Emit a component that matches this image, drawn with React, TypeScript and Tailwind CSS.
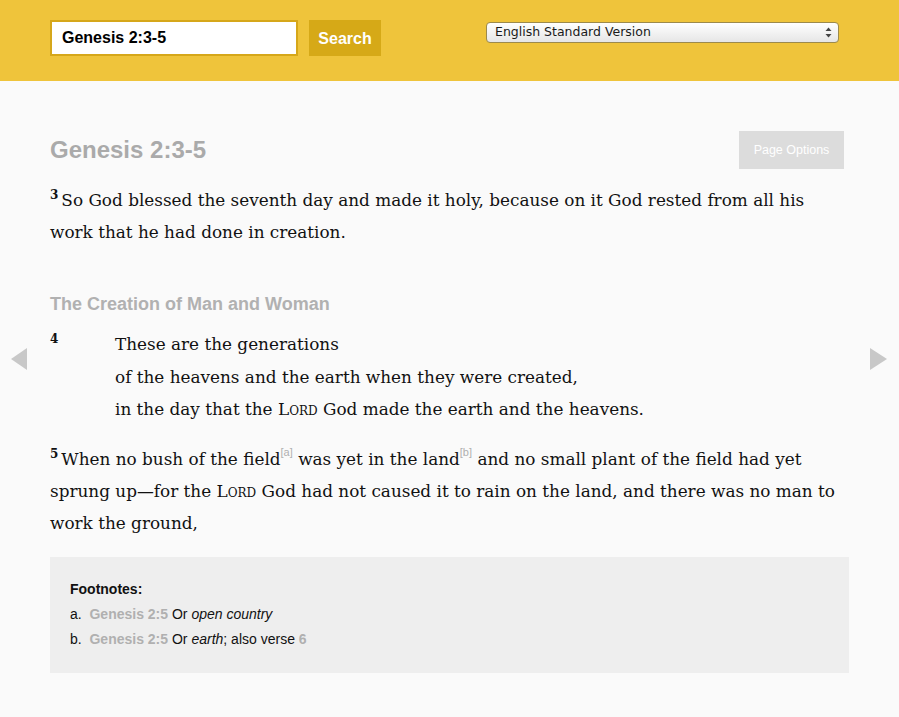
import React from "react";

const serif = { fontFamily: '"DejaVu Serif", serif' };
const sans = { fontFamily: '"Liberation Sans", Arial, sans-serif' };

export default function App() {
  return (
    <div className="min-h-[717px] bg-[#fafafa] relative" style={sans}>
      {/* Header */}
      <div className="h-[81px] bg-[#efc43b] flex items-start pt-[20px] pl-[50px]">
        <div className="w-[248px] h-[36px] border-2 border-[#d6a71a] bg-white flex items-center pl-[10px]">
          <span className="text-[16px] font-bold text-black">Genesis 2:3-5</span>
        </div>
        <div className="ml-[11px] w-[72px] h-[36px] bg-[#d6a917] flex items-center justify-center pt-[2px]">
          <span className="text-[16px] font-bold text-white">Search</span>
        </div>
        <div className="ml-[105px] mt-[2px] w-[353px] h-[21px] rounded-[4px] border border-[#9c8a4c] bg-gradient-to-b from-white to-[#e6e6e6] flex items-center pl-[8px] pr-[6px]">
          <span className="flex-1 text-[12.5px] text-[#1a1a1a]" style={{ fontFamily: '"DejaVu Sans", sans-serif' }}>English Standard Version</span>
          <svg width="7" height="11" viewBox="0 0 7 11">
            <path d="M3.5 0.5 L6.5 4 L0.5 4 Z" fill="#444" />
            <path d="M3.5 10.5 L6.5 7 L0.5 7 Z" fill="#444" />
          </svg>
        </div>
      </div>

      {/* Nav arrows */}
      <svg className="absolute left-[11px] top-[348px]" width="16" height="22" viewBox="0 0 16 22">
        <path d="M16 0 L0 11 L16 22 Z" fill="#c8c8c8" />
      </svg>
      <svg className="absolute left-[870px] top-[348px]" width="17" height="22" viewBox="0 0 17 22">
        <path d="M0 0 L17 11 L0 22 Z" fill="#c8c8c8" />
      </svg>

      {/* Content */}
      <div className="ml-[50px] w-[799px] pt-[50px]">
        <div className="flex items-center justify-between h-[38px]">
          <h1 className="text-[24px] font-bold text-[#aaaaaa] leading-none">Genesis 2:3-5</h1>
          <div className="mr-[5px] w-[105px] h-[38px] bg-[#dcdcdc] flex items-center justify-center text-[12.5px] font-medium text-white">Page Options</div>
        </div>

        <p className="mt-[15px] text-[16.85px] leading-[32px] text-[#111]" style={serif}>
          <sup className="font-bold text-[12px] mr-[3px] relative top-[-7px]">3</sup>So God blessed the seventh day and made it holy, because on it God rested from all his
          <br />
          work that he had done in creation.
        </p>

        <h2 className="mt-[44px] text-[18px] leading-[24px] font-bold text-[#b1b1b1]">The Creation of Man and Woman</h2>

        <div className="mt-[12px] flex text-[16.85px] leading-[32.5px] text-[#111]" style={serif}>
          <div className="w-[65px] relative">
            <sup className="absolute top-[5px] left-0 font-bold text-[12px] leading-none">4</sup>
          </div>
          <div>
            <div>These are the generations</div>
            <div>of the heavens and the earth when they were created,</div>
            <div>
              in the day that the <span className="[font-variant:small-caps]">Lord</span> God made the earth and the heavens.
            </div>
          </div>
        </div>

        <p className="mt-[17px] text-[16.85px] leading-[32px] text-[#111]" style={serif}>
          <sup className="font-bold text-[12px] mr-[3px] relative top-[-7px]">5</sup>When no bush of the field
          <sup className="text-[11px] text-[#b0b0b0] relative top-[-9px]" style={sans}>[a]</sup> was yet in the land
          <sup className="text-[11px] text-[#b0b0b0] relative top-[-9px]" style={sans}>[b]</sup> and no small plant of the field had yet
          <br />
          sprung up—for the <span className="[font-variant:small-caps]">Lord</span> God had not caused it to rain on the land, and there was no man to
          <br />
          work the ground,
        </p>

        <div className="mt-[18px] bg-[#eeeeee] pt-[20px] pb-[21px] pl-[20px] text-[14px] leading-[25px] text-[#111]">
          <div className="font-bold">Footnotes:</div>
          <div>
            a.&nbsp; <span className="font-bold text-[#b0b0b0]">Genesis 2:5</span> Or <i>open country</i>
          </div>
          <div>
            b.&nbsp; <span className="font-bold text-[#b0b0b0]">Genesis 2:5</span> Or <i>earth</i>; also verse{" "}
            <span className="font-bold text-[#b0b0b0]">6</span>
          </div>
        </div>
      </div>
    </div>
  );
}
